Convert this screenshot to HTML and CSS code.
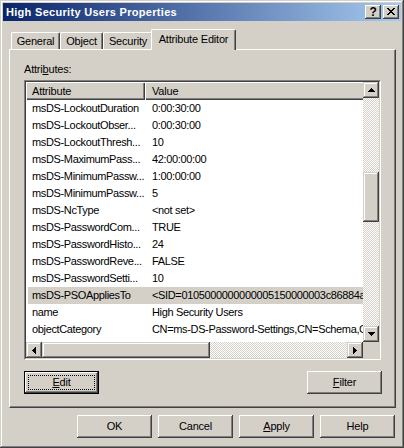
FILE: index.html
```html
<!DOCTYPE html>
<html>
<head>
<meta charset="utf-8">
<link rel="stylesheet" href="styles.css">
</head>
<body>
<div class="window">
  <div class="titlebar">
    <span class="title">High Security Users Properties</span>
    <div class="tbtns">
      <div class="tbtn help">?</div>
      <div class="tbtn close">
        <svg width="8" height="7" viewBox="0 0 8 7"><rect x="0" y="0" width="2" height="1"/><rect x="6" y="0" width="2" height="1"/><rect x="1" y="1" width="2" height="1"/><rect x="5" y="1" width="2" height="1"/><rect x="2" y="2" width="4" height="1"/><rect x="3" y="3" width="2" height="1"/><rect x="2" y="4" width="4" height="1"/><rect x="1" y="5" width="2" height="1"/><rect x="5" y="5" width="2" height="1"/><rect x="0" y="6" width="2" height="1"/><rect x="6" y="6" width="2" height="1"/></svg>
      </div>
    </div>
  </div>
  <div class="content">
    <div class="tabs">
      <div class="tab t1">General</div>
      <div class="tab t2">Object</div>
      <div class="tab t3">Security</div>
      <div class="tab t4 active">Attribute Editor</div>
    </div>
    <div class="panel">
      <div class="label">Attri<u>b</u>utes:</div>
      <div class="listview">
        <div class="lv-inner">
          <div class="lv-main">
            <div class="lv-body">
              <div class="lv-header">
                <div class="hcell a">Attribute</div>
                <div class="hcell v">Value</div>
              </div>
              <div class="row"><span class="c1">msDS-LockoutDuration</span><span class="c2">0:00:30:00</span></div>
              <div class="row"><span class="c1">msDS-LockoutObser...</span><span class="c2">0:00:30:00</span></div>
              <div class="row"><span class="c1">msDS-LockoutThresh...</span><span class="c2">10</span></div>
              <div class="row"><span class="c1">msDS-MaximumPass...</span><span class="c2">42:00:00:00</span></div>
              <div class="row"><span class="c1">msDS-MinimumPassw...</span><span class="c2">1:00:00:00</span></div>
              <div class="row"><span class="c1">msDS-MinimumPassw...</span><span class="c2">5</span></div>
              <div class="row"><span class="c1">msDS-NcType</span><span class="c2">&lt;not set&gt;</span></div>
              <div class="row"><span class="c1">msDS-PasswordCom...</span><span class="c2">TRUE</span></div>
              <div class="row"><span class="c1">msDS-PasswordHisto...</span><span class="c2">24</span></div>
              <div class="row"><span class="c1">msDS-PasswordReve...</span><span class="c2">FALSE</span></div>
              <div class="row"><span class="c1">msDS-PasswordSetti...</span><span class="c2">10</span></div>
              <div class="row sel"><span class="c1">msDS-PSOAppliesTo</span><span class="c2">&lt;SID=0105000000000005150000003c86884a5d7e2b1f&gt;</span></div>
              <div class="row"><span class="c1">name</span><span class="c2">High Security Users</span></div>
              <div class="row"><span class="c1">objectCategory</span><span class="c2">CN=ms-DS-Password-Settings,CN=Schema,CN=Configuration</span></div>
              <div class="row"><span class="c1">objectClass</span><span class="c2">top;msDS-PasswordSettings</span></div>
            </div>
            <div class="vscroll">
              <div class="sbtn"><svg width="7" height="4" viewBox="0 0 7 4"><rect x="3" y="0" width="1" height="1"/><rect x="2" y="1" width="3" height="1"/><rect x="1" y="2" width="5" height="1"/><rect x="0" y="3" width="7" height="1"/></svg></div>
              <div class="track vtrack"><div class="vthumb"></div></div>
              <div class="sbtn"><svg width="7" height="4" viewBox="0 0 7 4"><rect x="0" y="0" width="7" height="1"/><rect x="1" y="1" width="5" height="1"/><rect x="2" y="2" width="3" height="1"/><rect x="3" y="3" width="1" height="1"/></svg></div>
            </div>
          </div>
          <div class="lv-bottom">
            <div class="hscroll">
              <div class="sbtn"><svg width="4" height="7" viewBox="0 0 4 7"><rect x="0" y="3" width="1" height="1"/><rect x="1" y="2" width="1" height="3"/><rect x="2" y="1" width="1" height="5"/><rect x="3" y="0" width="1" height="7"/></svg></div>
              <div class="track htrack"><div class="hthumb"></div></div>
              <div class="sbtn"><svg width="4" height="7" viewBox="0 0 4 7"><rect x="0" y="0" width="1" height="7"/><rect x="1" y="1" width="1" height="5"/><rect x="2" y="2" width="1" height="3"/><rect x="3" y="3" width="1" height="1"/></svg></div>
            </div>
            <div class="corner"></div>
          </div>
        </div>
      </div>
      <div class="panel-btns">
        <div class="btn default"><span class="focus"><u>E</u>dit</span></div>
        <div class="btn"><u>F</u>ilter</div>
      </div>
    </div>
    <div class="dlg-btns">
      <div class="btn">OK</div>
      <div class="btn">Cancel</div>
      <div class="btn"><u>A</u>pply</div>
      <div class="btn">Help</div>
    </div>
  </div>
</div>
</body>
</html>
```

FILE: styles.css
```css
* { box-sizing: border-box; margin: 0; padding: 0; }
html, body { width: 404px; height: 448px; overflow: hidden; }
body {
  background: #D4D0C8;
  font-family: "Liberation Sans", Arial, sans-serif;
  font-size: 11px;
  letter-spacing: -0.2px;
  color: #000;
}
u { text-decoration: underline; text-underline-offset: 1px; }

.window {
  width: 404px;
  height: 448px;
  padding: 3px;
  background: #D4D0C8;
  box-shadow: inset -1px -1px #404040, inset 1px 1px #D4D0C8, inset -2px -2px #808080, inset 2px 2px #fff;
}

.titlebar {
  height: 18px;
  display: flex;
  align-items: center;
  justify-content: space-between;
  padding: 0 2px 0 3px;
  background: linear-gradient(to right, #0A246A, #A6CAF0);
}
.title {
  color: #fff;
  font-weight: bold;
  line-height: 13px;
  letter-spacing: 0.3px;
}
.tbtns { display: flex; gap: 2px; }
.tbtn {
  width: 16px;
  height: 14px;
  background: #D4D0C8;
  box-shadow: inset -1px -1px #404040, inset 1px 1px #fff, inset -2px -2px #808080;
  display: flex;
  align-items: center;
  justify-content: center;
}
.tbtn.help {
  font-weight: bold;
  font-size: 12px;
  line-height: 12px;
  padding-bottom: 1px;
}
.tbtn svg { display: block; margin-top: -1px; }

.content { padding: 8px 5px 0 6px; }

.tabs {
  display: flex;
  align-items: flex-end;
  height: 20px;
  padding-left: 2px;
}
.tab {
  height: 17px;
  border: 1px solid #fff;
  border-bottom: none;
  border-right-color: #404040;
  border-radius: 2px 2px 0 0;
  box-shadow: inset -1px 0 #808080;
  background: #D4D0C8;
  text-align: center;
  line-height: 13px;
  padding-top: 2px;
  white-space: nowrap;
}
.t1 { width: 49px; }
.t2 { width: 43px; }
.t3 { width: 50px; }
.tab.active {
  width: 85px;
  height: 21px;
  margin-left: -2px;
  margin-bottom: -1px;
  padding-top: 3px;
  position: relative;
  z-index: 1;
}

.panel {
  height: 359px;
  border: 1px solid;
  border-color: #fff #404040 #404040 #fff;
  box-shadow: inset -1px -1px #808080;
  padding: 13px 13px 0 14px;
}
.label { line-height: 13px; }

.listview {
  margin-top: 4px;
  width: 357px;
  height: 280px;
  border: 1px solid;
  border-color: #808080 #fff #fff #808080;
}
.lv-inner {
  height: 100%;
  border: 1px solid;
  border-color: #404040 #D4D0C8 #D4D0C8 #404040;
  display: flex;
  flex-direction: column;
}
.lv-main { display: flex; height: 260px; }
.lv-body {
  width: 337px;
  overflow: hidden;
  background: #fff;
  letter-spacing: -0.35px;
}
.lv-header {
  display: flex;
  height: 18px;
  line-height: 18px;
  background: #D4D0C8;
  white-space: nowrap;
  letter-spacing: -0.2px;
}
.hcell {
  flex: none;
  box-shadow: inset 1px 1px #fff, inset -1px -1px #404040, inset -2px -2px #808080;
  padding-left: 6px;
}
.hcell.a { width: 119px; }
.hcell.v { width: 300px; padding-left: 7px; }

.row {
  display: flex;
  height: 17px;
  line-height: 17px;
  white-space: nowrap;
}
.c1 { width: 119px; flex: none; padding-left: 6px; }
.c2 { padding-left: 7px; }
.row.sel { background: linear-gradient(90deg, #fff 2px, #D4D0C8 2px); }

.vscroll { width: 16px; display: flex; flex-direction: column; }
.sbtn {
  width: 16px;
  height: 16px;
  flex: none;
  background: #D4D0C8;
  box-shadow: inset -1px -1px #404040, inset 1px 1px #D4D0C8, inset -2px -2px #808080, inset 2px 2px #fff;
  display: flex;
  align-items: center;
  justify-content: center;
}
.sbtn svg { display: block; }
.track {
  flex: 1;
  background-image: repeating-conic-gradient(#fff 0 25%, #D4D0C8 0 50%);
  background-size: 2px 2px;
}
.vthumb, .hthumb {
  background: #D4D0C8;
  box-shadow: inset -1px -1px #404040, inset 1px 1px #D4D0C8, inset -2px -2px #808080, inset 2px 2px #fff;
}
.vthumb { margin-top: 74px; height: 50px; }
.lv-bottom { display: flex; height: 16px; }
.hscroll { width: 337px; display: flex; }
.htrack { display: flex; }
.hthumb { width: 168px; height: 16px; }
.corner { width: 16px; background: #D4D0C8; }

.panel-btns {
  display: flex;
  justify-content: space-between;
  margin-top: 11px;
}
.btn {
  width: 75px;
  height: 23px;
  background: #D4D0C8;
  box-shadow: inset -1px -1px #404040, inset 1px 1px #fff, inset -2px -2px #808080;
  display: flex;
  align-items: center;
  justify-content: center;
  line-height: 13px;
}
.btn.default {
  border: 1px solid #000;
  padding: 3px;
}
.focus {
  flex: 1;
  align-self: stretch;
  border: 1px dotted #000;
  display: flex;
  align-items: center;
  justify-content: center;
}
.dlg-btns {
  display: flex;
  justify-content: flex-end;
  gap: 6px;
  margin-top: 7px;
  padding-right: 1px;
}
```
